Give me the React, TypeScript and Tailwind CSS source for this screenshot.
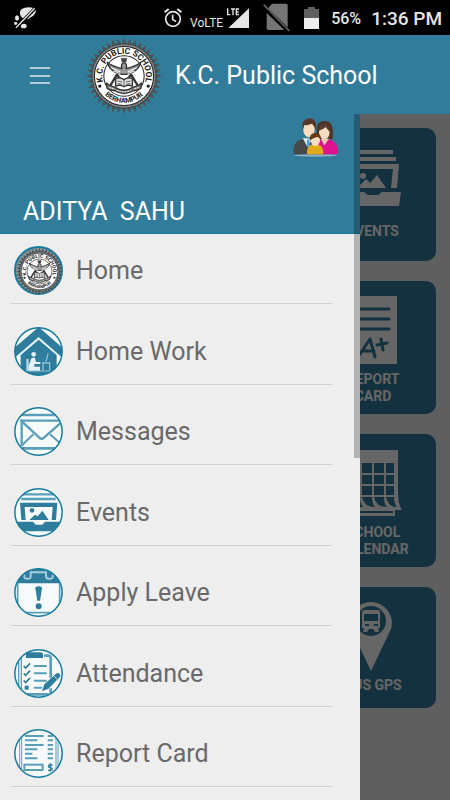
import { useId } from 'react';
import type { ReactNode } from 'react';

const BLUE = '#2f7d9d';
const MID = '#5a9fb9';

const spikes = Array.from({ length: 80 }, (_, i) => {
  const angle = (i * Math.PI) / 40;
  const radius = i % 2 === 0 ? 113 : 94;
  return `${113 + radius * Math.cos(angle)},${113 + radius * Math.sin(angle)}`;
}).join(' ');

function SchoolLogo({ className }: { className: string }) {
  const id = useId();
  return (
    <svg viewBox="0 0 226 226" className={className} role="img" aria-label="K.C. Public School logo">
      <polygon points={spikes} fill="#4d5558" />
      <circle cx="113" cy="113" r="95" fill="#777" stroke="#3c4244" strokeWidth="3" />
      <circle cx="113" cy="113" r="92" fill="none" stroke="#b5b5b5" strokeWidth="3" strokeDasharray="3 5" />
      <circle cx="113" cy="113" r="88" fill="#fff" stroke="#222" strokeWidth="3" />
      <circle cx="113" cy="113" r="60" fill="#fff" stroke="#222" strokeWidth="3" />
      <path id={`${id}t`} d="M54 139 A65 65 0 1 1 172 139" fill="none" />
      <path id={`${id}b`} d="M37 138 A80 80 0 0 0 189 138" fill="none" />
      <g fontFamily="Roboto, sans-serif" fontWeight="700" fill="#222">
        <text fontSize="25" textAnchor="middle">
          <textPath href={`#${id}t`} startOffset="50%">K.C. PUBLIC SCHOOL</textPath>
        </text>
        <text fontSize="21" textAnchor="middle">
          <textPath href={`#${id}b`} startOffset="50%">BERHAMPUR</textPath>
        </text>
      </g>
      <circle cx="41" cy="143" r="5" fill="#222" />
      <circle cx="185" cy="143" r="5" fill="#222" />
      <g fill="none" stroke="#333" strokeLinejoin="round">
        <path d="M104 60 h18 l-3 12 h-12z" fill="#444" />
        <path d="M113 74 c-8 0 -9 9 -6 17 c-17 -4 -33 -10 -44 -19 c4 14 13 24 25 30 l18 6 h14 l18 -6 c12 -6 21 -16 25 -30 c-11 9 -27 15 -44 19 c3 -8 2 -17 -6 -17z" fill="#999" strokeWidth="4" />
        <path d="M74 88 l28 13 M152 88 l-28 13 M82 98 l20 8 M144 98 l-20 8" stroke="#fff" strokeWidth="3" />
        <path d="M70 145 l22 -36 l12 16 M156 145 l-22 -36 l-12 16" strokeWidth="7" />
        <path d="M88 121 c9 -4 18 -3 25 3 c7 -6 16 -7 25 -3 v22 c-9 -4 -18 -3 -25 2 c-7 -5 -16 -6 -25 -2z" fill="#ddd" strokeWidth="4" />
        <path d="M113 124 v20 M94 128 l13 3 M94 135 l13 3 M119 131 l13 -3 M119 138 l13 -3" strokeWidth="2" />
        <path d="M60 134 c8 8 16 10 25 12 c18 12 38 12 56 0 c9 -2 17 -4 25 -12 l-3 16 c-8 5 -16 7 -23 7 c-18 11 -36 11 -54 0 c-7 0 -15 -2 -23 -7z" fill="#888" strokeWidth="4" />
        <path d="M70 147 l12 4 M92 155 c14 7 28 7 42 0 M144 151 l12 -4" stroke="#eee" strokeWidth="3" strokeDasharray="5 3" />
      </g>
    </svg>
  );
}

function RoundIcon({ children }: { children: ReactNode }) {
  const id = useId();
  return (
    <svg viewBox="0 0 147 147" className="size-[49px] shrink-0" aria-hidden="true">
      <clipPath id={id}>
        <circle cx="73.5" cy="73.5" r="71" />
      </clipPath>
      <g clipPath={`url(#${id})`}>
        <rect width="147" height="147" fill="#f6fafb" />
        {children}
      </g>
      <circle cx="73.5" cy="73.5" r="71" fill="none" stroke="#177c9c" strokeWidth="4.5" />
    </svg>
  );
}

function HomeIcon() {
  return (
    <span className="grid size-[49px] shrink-0 place-items-center rounded-full border-2 border-[#177c9c] bg-[#8d9496]">
      <SchoolLogo className="size-[47px]" />
    </span>
  );
}

const HomeWorkIcon = () => (
  <RoundIcon>
    <path d="M74 0 L147 64 V98 L74 32 L0 98 V64z" fill={BLUE} />
    <path d="M74 38 L128 84 V147 H20 V84z" fill={BLUE} />
    <path d="M6 92 L74 33 L141 92" fill="none" stroke="#e4f1f5" strokeWidth="5" />
    <circle cx="59" cy="82" r="7" fill="#e4f1f5" />
    <path d="M53 92 h10 l3 13 h13 v6 h-18 v8 h17 v13 h-35 v-14z" fill="#e4f1f5" />
    <path d="M37 96 h7 v36 h-7z" fill="#b9d8e3" />
    <path d="M84 108 h23 v24 M87 108 v24 M96 104 l6 -24" fill="none" stroke="#8fc0d1" strokeWidth="4" />
    <path d="M40 132 h69" stroke="#8fc0d1" strokeWidth="3" />
  </RoundIcon>
);

const MessagesIcon = () => (
  <RoundIcon>
    <g fill="none" stroke={MID} strokeWidth="7">
      <path d="M0 24 H147" strokeWidth="8" />
      <path d="M18 41 H147" />
      <path d="M23 38 V118" />
      <path d="M10 124 H137" strokeWidth="8" />
      <path d="M24 44 L76 92 Q83 99 90 92 L142 46" />
      <path d="M24 115 L58 82 M142 112 L108 82" strokeWidth="6" />
    </g>
  </RoundIcon>
);

const EventsIcon = () => (
  <RoundIcon>
    <path d="M26 19 h95 M22 33 h103" stroke={MID} strokeWidth="7" />
    <path d="M18 44 h112 l-4 52 h-13 l3 -39 H32 l3 39 H22z" fill={BLUE} />
    <circle cx="54" cy="67" r="7" fill={BLUE} />
    <path d="M46 96 l17 -16 l8 5 l14 -17 l19 28z" fill={BLUE} />
    <path d="M0 101 h57 l8 9 h20 l8 -9 h54 v29 H0z" fill={BLUE} />
  </RoundIcon>
);

const LeaveIcon = () => (
  <RoundIcon>
    <path d="M0 9 h147 v37 H0z" fill={BLUE} />
    <path d="M54 0 h40 v11 h-40z" fill={BLUE} />
    <g fill="none" stroke="#a6cddb" strokeWidth="6">
      <path d="M32 19 q-4 12 5 13 h6 q8 0 7 -9 v-10 h46 v10 q0 9 8 9 h6 q9 -1 6 -13" />
    </g>
    <path d="M11 44 V120 M137 44 V120 M28 134 H120" stroke={MID} strokeWidth="5" />
    <path d="M64 61 q0 -6 10 -6 q10 0 10 6 l-6 37 h-8z" fill={BLUE} />
    <circle cx="74" cy="115" r="9" fill={BLUE} />
  </RoundIcon>
);

const AttendanceIcon = () => (
  <RoundIcon>
    <path d="M14 28 V132 M22 20 V128" stroke={MID} strokeWidth="4" />
    <path d="M12 136 H104" stroke={MID} strokeWidth="8" />
    <path d="M36 27 v-12 q0 -5 8 -5 h35 q8 0 8 5 v12z" fill={BLUE} />
    <path d="M90 20 h13 q7 0 7 8 v58 M110 118 v18" fill="none" stroke={MID} strokeWidth="8" />
    <path d="M29 51 l6 6 l13 -14 M29 73 l6 6 l13 -14 M29 95 l6 6 l13 -14" fill="none" stroke={BLUE} strokeWidth="5" />
    <path d="M62 51 h34 M62 73 h34 M62 95 h34 M62 116 h20" stroke={MID} strokeWidth="6" strokeLinecap="round" />
    <rect x="32" y="110" width="12" height="12" fill={BLUE} />
    <path d="M84 127 l7 -21 l35 -32 q6 -4 11 1 q5 5 0 10 l-34 34z" fill={BLUE} />
    <path d="M119 80 l11 11" stroke="#b9d8e3" strokeWidth="3" />
  </RoundIcon>
);

const ReportIcon = () => (
  <RoundIcon>
    <path d="M17 12 V135 M23 12 V135 M126 12 V135 M132 12 V135" stroke={MID} strokeWidth="3" />
    <path d="M33 21 h56 M33 34 h37 M33 48 h56 M33 61 h37 M33 74 h22 M33 88 h37" stroke={MID} strokeWidth="6" />
    <path d="M101 21 h16 M101 34 h16 M101 48 h16 M101 61 h16 M101 74 h16 M101 88 h16" stroke={MID} strokeWidth="6" />
    <rect x="31" y="107" width="55" height="16" fill="none" stroke={MID} strokeWidth="6" />
    <path d="M116 108 h-8 q-5 0 -5 4 q0 4 6 4 q6 0 6 4 q0 4 -5 4 h-8 M109 102 v26" fill="none" stroke={BLUE} strokeWidth="4" />
  </RoundIcon>
);

const menu = [
  { label: 'Home', Icon: HomeIcon },
  { label: 'Home Work', Icon: HomeWorkIcon },
  { label: 'Messages', Icon: MessagesIcon },
  { label: 'Events', Icon: EventsIcon },
  { label: 'Apply Leave', Icon: LeaveIcon },
  { label: 'Attendance', Icon: AttendanceIcon },
  { label: 'Report Card', Icon: ReportIcon },
];

function StatusBar() {
  return (
    <div className="flex h-[35px] shrink-0 items-center bg-black pr-2 pl-3.5 text-[#e6e6e6]">
      <svg viewBox="0 0 66 66" className="mr-auto size-[22px]" aria-hidden="true">
        <g fill="#e6e6e6">
          <path d="M18 20 Q16 5 33 2 Q48 -1 58 3 Q68 6 65 16 Q60 28 50 31 Q45 38 36 36 Q20 34 18 20z" />
          <ellipse cx="9" cy="33" rx="6" ry="8" />
          <ellipse cx="29" cy="57" rx="9" ry="7" />
          <circle cx="5" cy="49" r="5" />
        </g>
        <path d="M4 65 L64 3" stroke="#000" strokeWidth="10" />
        <path d="M6 62 L62 4" stroke="#e6e6e6" strokeWidth="4" />
      </svg>
      <svg viewBox="0 0 54 60" className="h-5 w-[18px]" fill="none" stroke="#e6e6e6" aria-hidden="true">
        <circle cx="27" cy="33" r="22" strokeWidth="5" />
        <path d="M26 20 v14 l10 7" strokeWidth="5" />
        <path d="M2 13 L14 3 M52 13 L40 3" strokeWidth="6" />
      </svg>
      <span className="mt-2.5 ml-2 text-[12px] leading-4">VoLTE</span>
      <svg viewBox="0 0 66 60" className="ml-1 h-5 w-[22px]" aria-hidden="true">
        <path d="M66 1 V60 H4z" fill="#e6e6e6" />
        <path d="M0 0 H38 V24 H0z" fill="#000" />
        <path d="M2 1 V20 H10 M12 3 H24 M18 3 V22 M36 3 H28 V20 H36 M28 12 H35" fill="none" stroke="#e6e6e6" strokeWidth="4" />
      </svg>
      <svg viewBox="0 0 81 87" className="ml-[14px] h-[29px] w-[27px]" aria-hidden="true">
        <path d="M27 2 h42 q5 0 5 5 v69 q0 5 -5 5 H16 q-5 0 -5 -5 V20z" fill="#757575" />
        <path d="M0 10 L76 84" stroke="#000" strokeWidth="13" />
        <path d="M2 5 L79 84" stroke="#606060" strokeWidth="5" />
      </svg>
      <svg viewBox="0 0 45 66" className="ml-[14px] h-[22px] w-[15px]" aria-hidden="true">
        <path d="M12 0 h21 v6 h12 v27 H0 V6 h12z" fill="#606060" />
        <path d="M0 33 h45 v33 H0z" fill="#ececec" />
      </svg>
      <span className="mt-0.5 ml-3 text-[16px] leading-5 font-medium">56%</span>
      <span className="mt-0.5 ml-[10px] text-[19px] leading-5 font-medium">1:36 PM</span>
    </div>
  );
}

function Family() {
  return (
    <svg viewBox="65 35 141 120" className="h-10 w-[47px]" role="img" aria-label="Family">
      <ellipse cx="136" cy="150" rx="66" ry="4" fill="#8fb3c2" />
      <path d="M140 100 C136 60 140 48 162 47 C184 48 190 60 187 102z" fill="#4f342c" />
      <path d="M132 147 C136 108 146 101 163 101 C187 101 202 112 203 140 Q203 147 194 147z" fill="#e0128f" />
      <path d="M151 100 l11 20 l14 -20z" fill="#f3cfb0" />
      <ellipse cx="162" cy="80" rx="16" ry="22" fill="#f8dcc0" />
      <path d="M144 76 Q150 54 166 56 Q182 60 181 82 Q172 74 166 65 Q158 74 144 76z" fill="#5b3b31" />
      <path d="M69 140 C70 110 84 101 108 100 C134 100 142 112 142 147 H78 Q69 147 69 140z" fill="#474747" />
      <path d="M97 98 l14 26 l16 -24z" fill="#dcecf8" />
      <path d="M110 103 h7 l3 22 h-10z" fill="#4a9fd4" />
      <ellipse cx="116" cy="73" rx="17" ry="23" fill="#f8dcc0" />
      <path d="M97 75 Q91 42 116 39 Q142 40 136 73 Q132 59 124 55 Q110 62 102 58 Q99 66 97 75z" fill="#53372a" />
      <path d="M110 147 C109 124 118 117 134 117 C150 117 160 124 159 147z" fill="#e0ab18" />
      <ellipse cx="135" cy="105" rx="14" ry="17" fill="#fbdfc2" />
      <path d="M118 106 Q116 83 135 83 Q154 83 152 106 Q148 96 141 95 Q126 99 118 106z" fill="#6b3b17" />
    </svg>
  );
}

const cards = [
  {
    label: 'EVENTS',
    size: 'h-[133px]',
    art: (
      <svg viewBox="0 0 60 75" className="h-[75px] w-[60px]" aria-hidden="true">
        <g fill="#fff">
          <path d="M11 8 h39 v4 H10z M8 15 h45 v4 H7z" />
          <path d="M4 22 h52 l-2 24 h-6 l2 -19 H10 l2 19 H6z" />
          <circle cx="20" cy="34" r="3" />
          <path d="M14 46 l9 -9 l4 4 l7 -8 l9 13z" />
          <path d="M2 50 h19 l4 3 h10 l4 -3 h19 l-2 14 H4z" />
        </g>
      </svg>
    ),
  },
  {
    label: 'REPORT CARD',
    size: 'h-[133px]',
    art: (
      <svg viewBox="0 0 48 70" className="h-[70px] w-12" aria-hidden="true">
        <path d="M0 1 h48 v68 H0z" fill="#fff" />
        <g fill="none" stroke="#317c9b" strokeWidth="3" strokeLinecap="round" strokeLinejoin="round">
          <path d="M8 14 h32 M8 24 h32 M8 34 h32" />
          <path d="M9 62 L21 44 L26 62 M13 56 h12 M28 50 l10 -2 M32 44 l2 11" />
        </g>
      </svg>
    ),
  },
  {
    label: 'SCHOOL CALENDAR',
    size: 'h-[133px]',
    art: (
      <svg viewBox="0 0 58 70" className="h-[70px] w-[58px]" aria-hidden="true">
        <path d="M4 2 h50 v42 q0 12 4 18 h-7 v6 H4z" fill="#fff" />
        <g fill="#317c9b">
          <path d="M6 15h10v10H6z M18 15h10v10H18z M30 15h10v10H30z M42 15h8v10H42z" />
          <path d="M6 27h10v9H6z M18 27h10v9H18z M30 27h10v9H30z M42 27h8v9H42z" />
          <path d="M6 38h10v9H6z M18 38h10v9H18z M30 38h10v9H30z M42 38h8v9H42z" />
          <path d="M6 49h10q0 7 3 10H9z M18 49h10q0 7 3 10q-11 0-13-10z M30 49h10q0 7 3 10q-11 0-13-10z M42 49h8q0 7 3 10q-9 0-11-10z" />
        </g>
        <path d="M4 64 h45" stroke="#317c9b" strokeWidth="2" />
      </svg>
    ),
  },
  {
    label: 'BUS GPS',
    size: 'h-[121px]',
    art: (
      <svg viewBox="0 0 44 70" className="mr-1 h-[70px] w-11" aria-hidden="true">
        <path d="M22 1 a21 21 0 0 1 20 27 L22 70 L2 28 A21 21 0 0 1 22 1z" fill="#fff" />
        <circle cx="22" cy="20" r="15" fill="#317c9b" />
        <path d="M16 9 h13 q2 0 2 3 v15 h-2 l1 4 h-4 l-2 -3 h-4 l-2 3 h-4 l1 -4 h-2 V12 q0 -3 3 -3z" fill="#fff" />
        <path d="M15 13 h14 v7 H15z M16 23 h4 v2 h-4z M25 23 h4 v2 h-4z" fill="#317c9b" />
      </svg>
    ),
  },
];

export default function App() {
  return (
    <div className="flex h-screen flex-col overflow-hidden bg-[#eee] font-['Roboto',sans-serif]">
      <StatusBar />
      <header className="flex h-[79px] shrink-0 items-center bg-[#317c9b] pt-0.5 pl-[30px] text-white">
        <button type="button" aria-label="Menu" className="mr-9">
          <svg viewBox="0 0 20 18" className="h-[18px] w-5" aria-hidden="true">
            <path d="M0 1 h20 M0 9 h20 M0 16 h20" stroke="#dbe9ee" strokeWidth="1.5" />
          </svg>
        </button>
        <SchoolLogo className="size-[76px]" />
        <h1 className="ml-[13px] text-[25px] leading-8">K.C. Public School</h1>
      </header>

      <div className="relative flex-1 overflow-hidden">
        <main className="grid grid-cols-3 gap-x-[22px] gap-y-5 p-3.5">
          {cards.map(({ label, size, art }) => (
            <a
              key={label}
              href="#"
              className={`col-start-3 flex flex-col items-center rounded-[10px] bg-[#317c9b] px-6 pt-3.5 text-center text-[14px] leading-[17px] font-bold text-white ${size}`}
            >
              {art}
              <span className="mt-1.5">{label}</span>
            </a>
          ))}
        </main>

        <div className="absolute inset-0 bg-black/60" />

        <aside className="absolute inset-y-0 left-0 w-4/5 overflow-hidden bg-[#eee]">
          <div className="flex h-[120px] flex-col justify-between border-b border-[#177c9c] bg-[#317c9b] pt-[3px] pr-[21px] pb-[5px] pl-[23px]">
            <div className="flex justify-end">
              <Family />
            </div>
            <p className="text-[25px] leading-8 whitespace-pre text-white">ADITYA  SAHU</p>
          </div>
          <nav>
            <ul className="mr-7 ml-[11px]">
              {menu.map(({ label, Icon }) => (
                <li key={label} className="border-b border-[#d0d0d0] not-first:odd:h-20 first:h-[70px] even:h-[81px]">
                  <a href="#" className="flex h-full items-end gap-[13px] pb-2 pl-[3px] text-[25px] leading-[49px] text-[#696969]">
                    <Icon />
                    <span>{label}</span>
                  </a>
                </li>
              ))}
            </ul>
          </nav>
          <div className="absolute top-0 right-0 h-[344px] w-1.5 bg-black/25" />
        </aside>
      </div>
    </div>
  );
}
